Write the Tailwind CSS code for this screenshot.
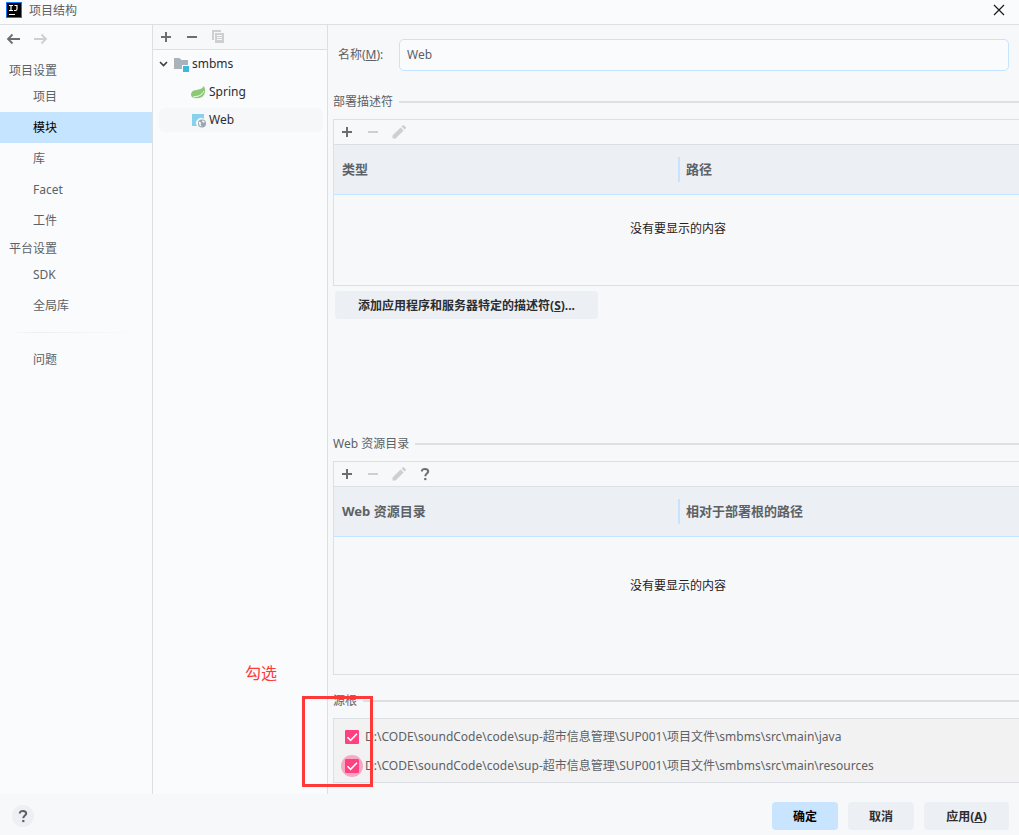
<!DOCTYPE html>
<html lang="zh-CN">
<head>
<meta charset="utf-8">
<title>项目结构</title>
<script src="https://cdn.jsdelivr.net/npm/@tailwindcss/browser@4"></script>
</head>
<body class="flex h-screen flex-col overflow-hidden bg-[#f7f8fa] font-['Noto_Sans','Noto_Sans_CJK_SC',sans-serif] text-xs text-[#5c6166]">

<svg class="hidden" aria-hidden="true">
  <symbol id="plus" viewBox="0 0 16 16"><path d="M7 3h2v4h4v2H9v4H7V9H3V7h4z" fill="currentColor"/></symbol>
  <symbol id="minus" viewBox="0 0 16 16"><path d="M3 7h10v2H3z" fill="currentColor"/></symbol>
  <symbol id="pencil" viewBox="0 0 16 16"><path d="M1.500 11.400 9.600 3.500l3 3-8 8H1.500zM10.500 2.600l1.200-1.200a1 1 0 0 1 1.400 0l1.600 1.600a1 1 0 0 1 0 1.400l-1.200 1.200z" fill="currentColor"/></symbol>
  <symbol id="help" viewBox="0 0 16 16"><path d="M4.800 5.500C4.800 3.700 6.100 2.900 8 2.900s3.200 1 3.200 2.600c0 2-2.900 2.300-2.900 4.700" fill="none" stroke="currentColor" stroke-width="2"/><path d="M7.200 12h2.200v2.100H7.200z" fill="currentColor"/></symbol>
  <symbol id="tick" viewBox="0 0 14 14"><path d="M2.500 7.300 5.600 10.300 12 3.800" fill="none" stroke="#fff" stroke-width="1.600"/></symbol>
</svg>

<header class="flex h-[25px] shrink-0 items-center border-b border-[#dcdfe3] bg-[#fafbfd] pb-1 pl-1.5 pr-3.5">
  <svg class="size-4" viewBox="0 0 16 16"><path d="M0 0h16v16H0z" fill="#087cfa"/><path d="M1 1h14v14H1z"/><path d="M3 12h6v1H3z" fill="#fff"/><path d="M3 3.500h4M5 3.500v5M3 8.500h4M8.500 3.500h2.500v3.500Q11 8.500 9.500 8.500H8" fill="none" stroke="#fff" stroke-width="1.200"/></svg>
  <h1 class="ml-[7px] flex-1 pt-0.5">项目结构</h1>
  <button aria-label="关闭" class="text-[#1a1a1a]"><svg class="size-3" viewBox="0 0 12 12"><path d="m1 1 10 10M11 1 1 11" stroke="currentColor" stroke-width="1.200"/></svg></button>
</header>

<div class="flex min-h-0 flex-1">
  <nav class="w-[153px] shrink-0 border-r border-[#dcdfe3] bg-[#fafbfd]">
    <div class="flex h-[33px] gap-3 pl-[5px] pt-1.5">
      <button aria-label="后退" class="size-4 text-[#6e6e6e]"><svg class="size-4" viewBox="0 0 16 16"><path d="M15 8H3M7.500 3.500 3 8l4.500 4.500" fill="none" stroke="currentColor" stroke-width="1.800"/></svg></button>
      <button aria-label="前进" class="size-4 text-[#cfcfcf]"><svg class="size-4" viewBox="0 0 16 16"><path d="M1 8h12M8.500 3.500 13 8l-4.500 4.500" fill="none" stroke="currentColor" stroke-width="1.800"/></svg></button>
    </div>
    <h2 class="flex h-[23px] items-center pl-[9px] pt-0.5">项目设置</h2>
    <a href="#project" class="flex h-[31px] items-center pl-[33px]">项目</a>
    <a href="#modules" aria-current="page" class="flex h-[31px] items-center bg-[#c5e4ff] pl-[33px] text-black">模块</a>
    <a href="#libraries" class="flex h-[31px] items-center pl-[33px]">库</a>
    <a href="#facets" class="flex h-[31px] items-center pl-[33px]">Facet</a>
    <a href="#artifacts" class="flex h-[31px] items-center pl-[33px]">工件</a>
    <h2 class="flex h-[23px] items-center pl-[9px] pt-0.5">平台设置</h2>
    <a href="#sdk" class="flex h-[31px] items-center pl-[33px]">SDK</a>
    <a href="#global" class="flex h-[31px] items-center pl-[33px]">全局库</a>
    <div class="flex h-[23px] items-center px-2.5"><div class="h-px flex-1 bg-linear-to-r from-transparent via-[#eceef1] via-20% to-transparent"></div></div>
    <a href="#problems" class="flex h-[31px] items-center pl-[33px]">问题</a>
  </nav>

  <aside class="w-[175px] shrink-0 border-r border-[#dcdfe3] bg-[#fafbfd] text-[#2b2d30]">
    <div class="flex h-[25px] items-center gap-2.5 border-b border-[#dcdfe3] bg-[#f7f8fa] pl-[5px] text-[#6e6e6e]">
      <button aria-label="添加"><svg class="size-4"><use href="#plus"/></svg></button>
      <button aria-label="移除"><svg class="size-4"><use href="#minus"/></svg></button>
      <button aria-label="复制" class="text-[#cfcfcf]"><svg class="size-4" viewBox="0 0 16 16"><path d="M2 1h9v2H4v8H2zM5 4h9v10H5z" fill="currentColor"/><path d="M7 6.500h5M7 8.500h5M7 10.500h5" stroke="#f7f8fa"/></svg></button>
    </div>
    <ul>
      <li class="flex h-7 items-center pl-1.5">
        <svg class="size-[10px]" viewBox="0 0 10 10"><path d="M1 3l3.500 3.500L8 3" fill="none" stroke="#3c3f41" stroke-width="1.600"/></svg>
        <svg class="ml-1 mr-[3px] size-4" viewBox="0 0 16 16"><path d="M1 2h5.500l2 2H15v5H9v4H1z" fill="#a9b3bb"/><path d="M10 10h6v6h-6z" fill="#40b6e0"/></svg>smbms</li>
      <li class="flex h-7 items-center pl-[37px]">
        <svg class="mr-[3px] size-4" viewBox="0 0 16 16"><path d="M14 2c2 4.200 1.400 9.800-3 11.500-3 1.100-6.500.7-8.700-.2C.2 11.500.8 8 3.800 6.600 7 5.400 11.500 6 14 2z" fill="#8bc975"/><path d="M3.500 12.700c4.700 0 8.500-1.500 10.300-5.500" fill="none" stroke="#fafbfd"/></svg>Spring</li>
      <li class="mr-1 ml-1.5 mt-0.5 flex h-6 items-center rounded-md bg-[#f6f7f9] pl-[31px]">
        <svg class="mr-[3px] size-4" viewBox="0 0 16 16"><path d="M2 2h12v5a5 5 0 0 0-7 7H2z" fill="#87d0ee"/><circle cx="12" cy="11.500" r="4" fill="#9aa7b0"/><path d="m9 9.500 2.500 1.200-1 1.300 1 2.500-1.800-.7L8.800 11zM12.500 8.300l-.4 1.500 1.700 1 1-.8c-.5-1-1.200-1.500-2.300-1.700z" fill="#f6f7f9"/></svg>Web</li>
    </ul>
  </aside>

  <main class="relative flex min-w-0 flex-1 flex-col pl-[5px]">
    <div class="flex items-center pl-[5px] pr-2.5 pt-3.5">
      <label for="name" class="w-[61px]">名称(<u>M</u>):</label>
      <input id="name" value="Web" class="h-8 min-w-0 flex-1 rounded-[5px] border border-[#c5e4ff] bg-[#fafbfd] px-[7px] pb-0.5">
    </div>

    <section class="mt-5 flex min-h-0 flex-1 flex-col">
      <div class="flex h-[22px] items-center gap-1.5"><h2>部署描述符</h2><div class="h-0.5 flex-1 bg-[#dcdfe3]"></div></div>
      <div class="-mr-1 mt-1.5 h-[167px] border border-[#dcdfe3]">
        <div class="flex h-[25px] items-center gap-2.5 border-b border-[#dcdfe3] pl-[5px] text-[#cfcfcf]">
          <button aria-label="添加" class="text-[#6e6e6e]"><svg class="size-4"><use href="#plus"/></svg></button>
          <button aria-label="移除"><svg class="size-4"><use href="#minus"/></svg></button>
          <button aria-label="编辑"><svg class="size-4"><use href="#pencil"/></svg></button>
        </div>
        <table class="w-full table-fixed border-separate border-spacing-0">
          <thead class="bg-[#eceff4] text-left text-[13px]">
            <tr class="h-[50px]">
              <th class="border-b border-[#c5e4ff] p-0 pl-2">类型</th>
              <th class="border-b border-[#c5e4ff] p-0"><div class="flex h-[25px] items-center border-l-2 border-[#c5e4ff] pl-1.5">路径</div></th>
            </tr>
          </thead>
          <tbody><tr><td colspan="2" class="p-0 pt-[26px] text-center text-[#1f2022]">没有要显示的内容</td></tr></tbody>
        </table>
      </div>
      <button class="ml-0.5 mt-[5px] h-7 w-[263px] rounded bg-[#eceff4] pt-0.5 font-bold text-[#2b2d30]">添加应用程序和服务器特定的描述符(<u>S</u>)...</button>
    </section>

    <section>
      <div class="flex h-[22px] items-center gap-1.5"><h2>Web 资源目录</h2><div class="h-0.5 flex-1 bg-[#dcdfe3]"></div></div>
      <div class="-mr-1 mt-1.5 h-[214px] border border-[#dcdfe3]">
        <div class="flex h-[25px] items-center gap-2.5 border-b border-[#dcdfe3] pl-[5px] text-[#cfcfcf]">
          <button aria-label="添加" class="text-[#6e6e6e]"><svg class="size-4"><use href="#plus"/></svg></button>
          <button aria-label="移除"><svg class="size-4"><use href="#minus"/></svg></button>
          <button aria-label="编辑"><svg class="size-4"><use href="#pencil"/></svg></button>
          <button aria-label="帮助" class="text-[#6e6e6e]"><svg class="size-4"><use href="#help"/></svg></button>
        </div>
        <table class="w-full table-fixed border-separate border-spacing-0">
          <thead class="bg-[#eceff4] text-left text-[13px]">
            <tr class="h-[50px]">
              <th class="border-b border-[#c5e4ff] p-0 pl-2">Web 资源目录</th>
              <th class="border-b border-[#c5e4ff] p-0"><div class="flex h-[25px] items-center border-l-2 border-[#c5e4ff] pl-1.5">相对于部署根的路径</div></th>
            </tr>
          </thead>
          <tbody><tr><td colspan="2" class="p-0 pt-[41px] text-center text-[#1f2022]">没有要显示的内容</td></tr></tbody>
        </table>
      </div>
    </section>

    <section class="mb-[11px] mt-[15px]">
      <div class="flex h-[22px] items-center gap-1.5"><h2>源根</h2><div class="h-0.5 flex-1 bg-[#dcdfe3]"></div></div>
      <div class="-mr-1 mt-1.5 flex h-[65px] flex-col justify-center gap-[7px] border border-[#dcdfe3] bg-[#f2f2f2] pt-0.5">
        <label class="flex h-[22px] items-center whitespace-nowrap pl-[7px]">
          <span class="mr-0.5 grid size-[22px] place-items-center rounded-full">
            <input type="checkbox" checked class="col-start-1 row-start-1 size-3.5 appearance-none rounded-[1px] bg-[#ff4081]">
            <svg class="pointer-events-none col-start-1 row-start-1 size-3.5"><use href="#tick"/></svg>
          </span>D:\CODE\soundCode\code\sup-超市信息管理\SUP001\项目文件\smbms\src\main\java</label>
        <label class="flex h-[22px] items-center whitespace-nowrap pl-[7px]">
          <span class="mr-0.5 grid size-[22px] place-items-center rounded-full bg-[#f7a8c4]">
            <input type="checkbox" checked class="col-start-1 row-start-1 size-3.5 appearance-none rounded-[1px] bg-[#ff4081]">
            <svg class="pointer-events-none col-start-1 row-start-1 size-3.5"><use href="#tick"/></svg>
          </span>D:\CODE\soundCode\code\sup-超市信息管理\SUP001\项目文件\smbms\src\main\resources</label>
      </div>
    </section>

    <!-- annotation drawn over the dialog -->
    <div class="pointer-events-none absolute -left-[26px] bottom-[7px] h-[91px] w-[71px] border-3 border-[#ff3838]"></div>
    <p class="pointer-events-none absolute -left-[83px] bottom-[109px] whitespace-nowrap text-base text-[#ff3838]">勾选</p>
  </main>
</div>

<footer class="flex h-[41px] shrink-0 items-center gap-2.5 pb-px pl-3 pr-2.5 pt-1 font-bold text-[#2b2d30]">
  <button aria-label="帮助" class="mr-auto grid size-[22px] place-items-center rounded-full bg-[#eceff4] text-[#5f5f5f]"><svg class="size-4"><use href="#help"/></svg></button>
  <button class="h-7 w-[66px] rounded bg-[#c9e4ff] pt-0.5 text-black">确定</button>
  <button class="h-7 w-[66px] rounded bg-[#eceff4] pt-0.5">取消</button>
  <button class="h-7 w-[85px] rounded bg-[#eceff4] pt-0.5">应用(<u>A</u>)</button>
</footer>
</body>
</html>
